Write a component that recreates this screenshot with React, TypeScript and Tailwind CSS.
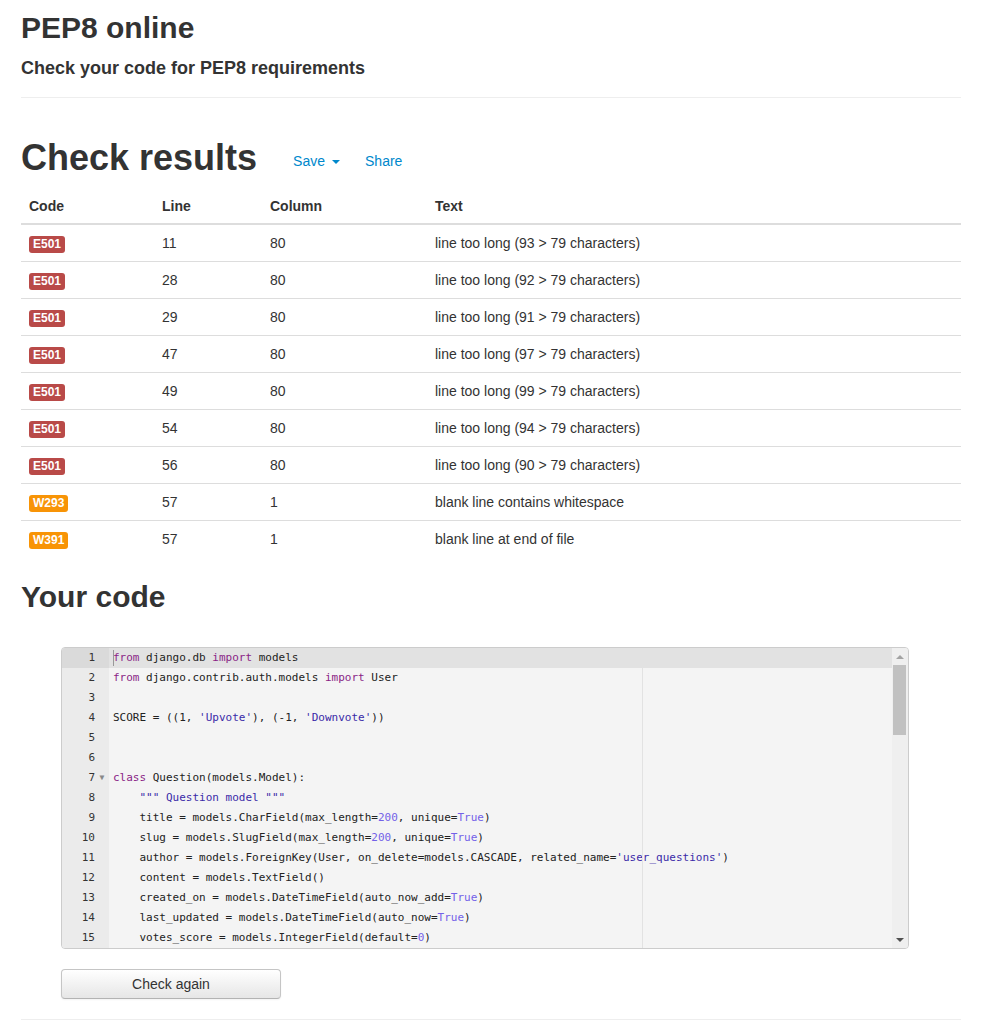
import React from 'react'

type Tok = [string, string?]

const results = [
  { code: 'E501', line: 11, col: 80, text: 'line too long (93 > 79 characters)' },
  { code: 'E501', line: 28, col: 80, text: 'line too long (92 > 79 characters)' },
  { code: 'E501', line: 29, col: 80, text: 'line too long (91 > 79 characters)' },
  { code: 'E501', line: 47, col: 80, text: 'line too long (97 > 79 characters)' },
  { code: 'E501', line: 49, col: 80, text: 'line too long (99 > 79 characters)' },
  { code: 'E501', line: 54, col: 80, text: 'line too long (94 > 79 characters)' },
  { code: 'E501', line: 56, col: 80, text: 'line too long (90 > 79 characters)' },
  { code: 'W293', line: 57, col: 1, text: 'blank line contains whitespace' },
  { code: 'W391', line: 57, col: 1, text: 'blank line at end of file' },
]

// k = keyword, s = string, n = number / atom
const code: Tok[][] = [
  [['from', 'k'], [' django.db '], ['import', 'k'], [' models']],
  [['from', 'k'], [' django.contrib.auth.models '], ['import', 'k'], [' User']],
  [],
  [['SCORE = ((1, '], ["'Upvote'", 's'], ['), (-1, '], ["'Downvote'", 's'], ['))']],
  [],
  [],
  [['class', 'k'], [' Question(models.Model):']],
  [['    '], ['""" Question model """', 's']],
  [['    title = models.CharField(max_length='], ['200', 'n'], [', unique='], ['True', 'n'], [')']],
  [['    slug = models.SlugField(max_length='], ['200', 'n'], [', unique='], ['True', 'n'], [')']],
  [['    author = models.ForeignKey(User, on_delete=models.CASCADE, related_name='], ["'user_questions'", 's'], [')']],
  [['    content = models.TextField()']],
  [['    created_on = models.DateTimeField(auto_now_add='], ['True', 'n'], [')']],
  [['    last_updated = models.DateTimeField(auto_now='], ['True', 'n'], [')']],
  [['    votes_score = models.IntegerField(default='], ['0', 'n'], [')']],
]

function tokClass(kind?: string) {
  if (kind === 'k') return 'text-[#8a1f86]'
  if (kind === 's') return 'text-[#3a2aa8]'
  if (kind === 'n') return 'text-[#7361e8]'
  return ''
}

function Badge({ code }: { code: string }) {
  const warn = code.startsWith('W')
  return (
    <span className={(warn ? 'bg-[#f89406]' : 'bg-[#b94a48]') + ' inline-block rounded-[3px] px-[4px] text-[12px] font-bold leading-[17px] text-white'}>
      {code}
    </span>
  )
}

export default function App() {
  return (
    <main className="min-h-screen bg-white text-[#333] font-['Liberation_Sans',Arial,sans-serif] text-[14px]">
      <div className="ml-[21px] w-[940px] pt-[11px]">
        {/* header */}
        <h1 className="text-[30px] font-bold leading-[33px]">PEP8 online</h1>
        <p className="mt-[14px] text-[18px] font-bold leading-[20px]">Check your code for PEP8 requirements</p>
        <hr className="mt-[19px] border-t border-[#eee]" />

        {/* results */}
        <div className="mt-[40px] flex items-center">
          <h1 className="text-[36px] font-bold leading-[40px]">Check results</h1>
          <a className="ml-[36px] mt-[6px] flex items-center text-[#0088cc] leading-[20px] cursor-pointer">
            Save
            <span className="ml-[7px] mt-[2px] inline-block h-0 w-0 border-x-[4px] border-t-[4px] border-x-transparent border-t-[#0088cc]" />
          </a>
          <a className="ml-[25px] mt-[6px] text-[#0088cc] leading-[20px] cursor-pointer">Share</a>
        </div>

        <table className="mt-[9px] w-full border-collapse text-left">
          <thead>
            <tr className="border-b-2 border-[#ddd]">
              <th className="w-[133px] px-[8px] pt-[9px] pb-[7px] leading-[20px] font-bold">Code</th>
              <th className="w-[108px] px-[8px] pt-[9px] pb-[7px] leading-[20px] font-bold">Line</th>
              <th className="w-[165px] px-[8px] pt-[9px] pb-[7px] leading-[20px] font-bold">Column</th>
              <th className="px-[8px] pt-[9px] pb-[7px] leading-[20px] font-bold">Text</th>
            </tr>
          </thead>
          <tbody>
            {results.map((r, i) => (
              <tr key={i} className={i > 0 ? 'border-t border-[#ddd]' : ''}>
                <td className="px-[8px] py-[8px] leading-[20px]"><Badge code={r.code} /></td>
                <td className="px-[8px] py-[8px] leading-[20px]">{r.line}</td>
                <td className="px-[8px] py-[8px] leading-[20px]">{r.col}</td>
                <td className="px-[8px] py-[8px] leading-[20px]">{r.text}</td>
              </tr>
            ))}
          </tbody>
        </table>

        {/* code */}
        <h2 className="mt-[23px] text-[30px] font-bold leading-[33px]">Your code</h2>

        <div className="ml-[40px] mt-[34px] w-[848px]">
          <div className="flex h-[302px] overflow-hidden rounded-[4px] border border-[#ccc] bg-[#f4f4f4]">
            <div className="relative flex-1 overflow-hidden font-['DejaVu_Sans_Mono',monospace] text-[11px] text-[#222]">
              {code.map((toks, i) => (
                <div key={i} className={(i === 0 ? 'bg-[#e2e2e2]' : '') + ' flex h-[20px] items-center'}>
                  <div className={(i === 0 ? 'bg-[#dadada]' : 'bg-[#ebebeb]') + ' flex h-full w-[47px] shrink-0 items-center justify-end text-[#333]'}>
                    <span>{i + 1}</span>
                    <span className="w-[14px] text-center text-[8px] text-[#888]">{i === 6 ? '▼' : ''}</span>
                  </div>
                  <div className="whitespace-pre pl-[4px]">
                    {toks.map((t, j) => (
                      <span key={j} className={tokClass(t[1])}>{t[0]}</span>
                    ))}
                  </div>
                </div>
              ))}
              {/* print margin + cursor */}
              <div className="absolute bottom-0 left-[580px] top-0 w-px bg-[#e2e2e2]" />
              <div className="absolute left-[51px] top-[2px] h-[16px] w-px bg-[#999]" />
            </div>

            {/* scrollbar */}
            <div className="flex w-[16px] flex-col bg-[#efefef]">
              <div className="flex h-[17px] items-center justify-center">
                <span className="h-0 w-0 border-x-[4px] border-b-[4px] border-x-transparent border-b-[#a3a3a3]" />
              </div>
              <div className="ml-[1px] h-[70px] w-[13px] bg-[#c1c1c1]" />
              <div className="flex-1" />
              <div className="flex h-[17px] items-center justify-center">
                <span className="h-0 w-0 border-x-[4px] border-t-[4px] border-x-transparent border-t-[#505050]" />
              </div>
            </div>
          </div>

          <button className="mt-[20px] h-[30px] w-[220px] rounded-[4px] border border-[#c5c5c5] border-b-[#b3b3b3] bg-gradient-to-b from-white to-[#e6e6e6] text-[14px] text-[#333] shadow-[inset_0_1px_0_rgba(255,255,255,0.2),0_1px_2px_rgba(0,0,0,0.05)]">
            Check again
          </button>
        </div>

        <hr className="mt-[20px] border-t border-[#eee]" />
      </div>
    </main>
  )
}
